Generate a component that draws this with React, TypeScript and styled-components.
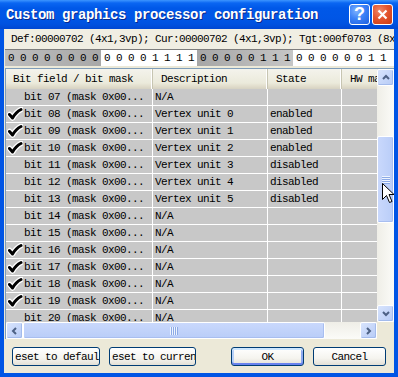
import styled, { createGlobalStyle } from 'styled-components';

const GlobalStyle = createGlobalStyle`
    html, body {
        margin: 0;
        padding: 0;
        background: #ffffff;
    }
    body {
        font-family: "Liberation Mono", "DejaVu Sans Mono", monospace;
    }
`;

const mono = `
    font-family: "Liberation Mono", "DejaVu Sans Mono", monospace;
    font-size: 11px;
    letter-spacing: -0.6px;
    color: #000;
    white-space: nowrap;
`;

const Window = styled.div`
    position: relative;
    width: 398px;
    height: 377px;
    display: flex;
    flex-direction: column;
    background: #0055e5;
    overflow: hidden;
`;

const TitleBar = styled.div`
    height: 29px;
    flex: none;
    display: flex;
    align-items: center;
    padding: 0 5px 0 6px;
    background: linear-gradient(to bottom, #3d95ff 0px, #0a66f2 3px, #0058e8 8px, #0056e6 18px, #0052e0 24px, #0047d2 29px);
`;

const Title = styled.div`
    flex: 1;
    font-family: "Liberation Mono", "DejaVu Sans Mono", monospace;
    font-size: 14px;
    font-weight: bold;
    letter-spacing: -0.4px;
    color: #ffffff;
    text-shadow: 1px 1px 0 #0b2a8c;
    white-space: nowrap;
`;

const CaptionButton = styled.div<{ kind: 'help' | 'close' }>`
    width: 21px;
    height: 21px;
    box-sizing: border-box;
    margin-left: 2px;
    border: 1px solid #ffffff;
    border-radius: 3px;
    display: flex;
    align-items: center;
    justify-content: center;
    background: ${props => props.kind === 'close'
        ? 'radial-gradient(circle at 35% 30%, #f0896b 0%, #e3552f 45%, #c93a12 100%)'
        : 'radial-gradient(circle at 35% 30%, #7fb3ff 0%, #3c82f7 45%, #1e5fe0 100%)'};
    color: #ffffff;
    font-family: "Liberation Sans", Arial, sans-serif;
    font-weight: bold;
    font-size: 18px;
`;

const Body = styled.div`
    flex: 1;
    margin: 0 4px 4px 4px;
    padding-left: 1px;
    background: #ece9d8;
    display: flex;
    flex-direction: column;
`;

const InfoLine = styled.div`
    ${mono}
    height: 20px;
    flex: none;
    display: flex;
    align-items: center;
    padding-left: 6px;
    background: #f0eee3;
    border-bottom: 1px solid #7d7d7d;
    overflow: hidden;
`;

const BitsRow = styled.div`
    ${mono}
    height: 16px;
    flex: none;
    display: flex;
    background: #ffffff;
    overflow: hidden;
`;

const BitGroup = styled.div<{ shaded: boolean; reverse?: boolean }>`
    width: 96px;
    flex: none;
    display: flex;
    align-items: center;
    background: ${props => props.shaded
        ? (props.reverse
            ? 'linear-gradient(to right, #a6a6a6, #c6c6c6)'
            : 'linear-gradient(to right, #bdbdbd, #a8a8a8)')
        : '#ffffff'};
`;

const Bit = styled.span`
    width: 12px;
    text-align: center;
`;

const List = styled.div`
    margin-top: 2px;
    height: 271px;
    flex: none;
    box-sizing: border-box;
    border-top: 1px solid #7f9db9;
    border-left: 1px solid #7f9db9;
    display: grid;
    grid-template-columns: 1fr 17px;
    grid-template-rows: 1fr 17px;
    background: #ffffff;
`;

const Viewport = styled.div`
    overflow: hidden;
    background: #c8c8c8;
`;

const Header = styled.div`
    height: 20px;
    display: flex;
    background: linear-gradient(to bottom, #f4f3ec 0%, #ebeadb 70%, #e2decd 85%, #d6d2c2 100%);
`;

const HeaderCell = styled.div<{ width: number; indent?: number }>`
    ${mono}
    width: ${props => props.width}px;
    flex: none;
    box-sizing: border-box;
    padding-left: ${props => props.indent ?? 8}px;
    display: flex;
    align-items: center;
    border-right: 1px solid #c7c5b2;
    box-shadow: inset -1px 0 0 #ffffff;
    overflow: hidden;
`;

const Row = styled.div`
    height: 17px;
    display: flex;
    box-sizing: border-box;
    border-bottom: 1px solid #ffffff;
`;

const Cell = styled.div<{ width: number }>`
    ${mono}
    width: ${props => props.width}px;
    flex: none;
    box-sizing: border-box;
    padding-left: 2px;
    display: flex;
    align-items: center;
    border-right: 1px solid #ffffff;
    overflow: hidden;
`;

const CheckSlot = styled.span`
    width: 17px;
    height: 16px;
    flex: none;
    display: flex;
    align-items: center;
    justify-content: flex-start;
    margin-left: -1px;
`;

const VScroll = styled.div`
    display: flex;
    flex-direction: column;
    background: linear-gradient(to right, #efeee7, #fbfbf8);
`;

const HScroll = styled.div`
    display: flex;
    background: linear-gradient(to bottom, #efeee7, #fbfbf8);
`;

const Corner = styled.div`
    background: #ece9d8;
`;

const ArrowButton = styled.div`
    width: 17px;
    height: 17px;
    flex: none;
    box-sizing: border-box;
    border: 1px solid #ffffff;
    border-radius: 2px;
    display: flex;
    align-items: center;
    justify-content: center;
    background: linear-gradient(135deg, #d8e4fd, #b7cbf6);
    box-shadow: inset -1px -1px 0 #a3bbec;
`;

const Track = styled.div<{ size?: number }>`
    flex: ${props => props.size ? `none` : '1'};
    ${props => props.size ? `height: ${props.size}px;` : ''}
`;

const Thumb = styled.div<{ vertical: boolean; size: number }>`
    flex: none;
    box-sizing: border-box;
    ${props => props.vertical ? `height: ${props.size}px;` : `width: ${props.size}px;`}
    border: 1px solid #ffffff;
    border-radius: 2px;
    display: flex;
    align-items: center;
    justify-content: center;
    background: ${props => props.vertical
        ? 'linear-gradient(to right, #c9d8fc, #b9cdf8)'
        : 'linear-gradient(to bottom, #c9d8fc, #b9cdf8)'};
    box-shadow: inset -1px -1px 0 #a8bef0;
`;

const ButtonBar = styled.div`
    flex: 1;
    display: flex;
    align-items: flex-start;
    padding: 8px 8px 0 7px;
`;

const Button = styled.div<{ width: number; main?: boolean; align?: string }>`
    ${mono}
    width: ${props => props.width}px;
    height: 19px;
    box-sizing: border-box;
    border: 1px solid #003c74;
    border-radius: 3px;
    display: flex;
    align-items: center;
    justify-content: ${props => props.align || 'center'};
    padding-left: ${props => props.align ? '2px' : '0'};
    margin-right: 9px;
    overflow: hidden;
    background: linear-gradient(to bottom, #ffffff 0%, #f5f4ef 60%, #e3e0d6 100%);
    ${props => props.main && `
        box-shadow: inset 0 2px 0 #cee7ff, inset 0 -2px 0 #6982ee, inset 2px 0 0 #b8d1f8, inset -2px 0 0 #8ea9f0;
    `}
`;

const Spacer = styled.div`
    flex: 1;
`;

const Cursor = styled.svg`
    position: absolute;
    left: 382px;
    top: 183px;
`;

const cols = [147, 115, 74, 80];

type Entry = { bit: string; desc: string; state: string; checked: boolean };

const rows: Entry[] = [
    { bit: '07', desc: 'N/A', state: '', checked: false },
    { bit: '08', desc: 'Vertex unit 0', state: 'enabled', checked: true },
    { bit: '09', desc: 'Vertex unit 1', state: 'enabled', checked: true },
    { bit: '10', desc: 'Vertex unit 2', state: 'enabled', checked: true },
    { bit: '11', desc: 'Vertex unit 3', state: 'disabled', checked: false },
    { bit: '12', desc: 'Vertex unit 4', state: 'disabled', checked: false },
    { bit: '13', desc: 'Vertex unit 5', state: 'disabled', checked: false },
    { bit: '14', desc: 'N/A', state: '', checked: false },
    { bit: '15', desc: 'N/A', state: '', checked: false },
    { bit: '16', desc: 'N/A', state: '', checked: true },
    { bit: '17', desc: 'N/A', state: '', checked: true },
    { bit: '18', desc: 'N/A', state: '', checked: true },
    { bit: '19', desc: 'N/A', state: '', checked: true },
    { bit: '20', desc: 'N/A', state: '', checked: false },
];

const bitGroups = ['00000000', '00001111', '00000111', '00000011'];

// heavy tick with a white halo, like the reference
const Check = () => (
    <svg width="16" height="14" viewBox="0 0 16 14">
        <path d="M2.5 7.5 L5.5 11 Q9 5 14 2.5" fill="none" stroke="#ffffff" strokeWidth="5.5" strokeLinecap="round" strokeLinejoin="round" />
        <path d="M2.5 7.5 L5.5 11 Q9 5 14 2.5" fill="none" stroke="#000000" strokeWidth="3" strokeLinecap="round" strokeLinejoin="round" />
    </svg>
);

const Chevron = ({ dir }: { dir: 'up' | 'down' | 'left' | 'right' }) => {
    const d = {
        up: 'M2 6 L5 3 L8 6',
        down: 'M2 3 L5 6 L8 3',
        left: 'M6 2 L3 5 L6 8',
        right: 'M3 2 L6 5 L3 8',
    }[dir];
    return (
        <svg width="10" height="9" viewBox="0 0 10 9">
            <path d={d} fill="none" stroke="#4d6185" strokeWidth="2" />
        </svg>
    );
};

const Grip = ({ vertical }: { vertical: boolean }) => (
    <svg width={8} height={8} viewBox="0 0 8 8">
        {[0, 2, 4, 6].map(i => vertical
            ? <line key={i} x1="0" y1={i + 0.5} x2="8" y2={i + 0.5} stroke="#eef4fe" strokeWidth="1" />
            : <line key={i} x1={i + 0.5} y1="0" x2={i + 0.5} y2="8" stroke="#eef4fe" strokeWidth="1" />)}
        {[1, 3, 5, 7].map(i => vertical
            ? <line key={i} x1="0" y1={i + 0.5} x2="8" y2={i + 0.5} stroke="#8caae6" strokeWidth="1" />
            : <line key={i} x1={i + 0.5} y1="0" x2={i + 0.5} y2="8" stroke="#8caae6" strokeWidth="1" />)}
    </svg>
);

const App = () => {
    return (
        <>
            <GlobalStyle />
            <Window>
                <TitleBar>
                    <Title>Custom graphics processor configuration</Title>
                    <CaptionButton kind="help">?</CaptionButton>
                    <CaptionButton kind="close">
                        <svg width="11" height="11" viewBox="0 0 11 11">
                            <path d="M1.5 1.5 L9.5 9.5 M9.5 1.5 L1.5 9.5" stroke="#ffffff" strokeWidth="2.2" />
                        </svg>
                    </CaptionButton>
                </TitleBar>
                <Body>
                    <InfoLine>Def:00000702 (4x1,3vp); Cur:00000702 (4x1,3vp); Tgt:000f0703 (8x1,3vp)</InfoLine>
                    <BitsRow>
                        {bitGroups.map((group, index) => (
                            <BitGroup key={index} shaded={index % 2 === 0} reverse={index === 2}>
                                {group.split('').map((b, i) => <Bit key={i}>{b}</Bit>)}
                            </BitGroup>
                        ))}
                    </BitsRow>
                    <List>
                        <Viewport>
                            <Header>
                                <HeaderCell width={cols[0]} indent={7}>Bit field / bit mask</HeaderCell>
                                <HeaderCell width={cols[1]}>Description</HeaderCell>
                                <HeaderCell width={cols[2]}>State</HeaderCell>
                                <HeaderCell width={cols[3]}>HW mask</HeaderCell>
                            </Header>
                            {rows.map(entry => (
                                <Row key={entry.bit}>
                                    <Cell width={cols[0]}>
                                        <CheckSlot>{entry.checked && <Check />}</CheckSlot>
                                        bit {entry.bit} (mask 0x00...
                                    </Cell>
                                    <Cell width={cols[1]}>{entry.desc}</Cell>
                                    <Cell width={cols[2]}>{entry.state}</Cell>
                                    <Cell width={cols[3]} />
                                </Row>
                            ))}
                        </Viewport>
                        <VScroll>
                            <ArrowButton><Chevron dir="up" /></ArrowButton>
                            <Track size={50} />
                            <Thumb vertical size={87}><Grip vertical /></Thumb>
                            <Track />
                            <ArrowButton><Chevron dir="down" /></ArrowButton>
                        </VScroll>
                        <HScroll>
                            <ArrowButton><Chevron dir="left" /></ArrowButton>
                            <Thumb vertical={false} size={302}><Grip vertical={false} /></Thumb>
                            <Track />
                            <ArrowButton><Chevron dir="right" /></ArrowButton>
                        </HScroll>
                        <Corner />
                    </List>
                    <ButtonBar>
                        <Button width={88} align="flex-start">eset to defaul</Button>
                        <Button width={87} align="flex-start">eset to curren</Button>
                        <Spacer />
                        <Button width={73} main>OK</Button>
                        <Button width={73} style={{ marginRight: 0 }}>Cancel</Button>
                    </ButtonBar>
                </Body>
                <Cursor width="13" height="21" viewBox="0 0 13 21">
                    <path d="M0.5 0.5 L0.5 16.5 L4.5 12.5 L7.5 19.5 L10 18.5 L7 11.5 L12 11.5 Z" fill="#ffffff" stroke="#000000" strokeWidth="1" strokeLinejoin="miter" />
                </Cursor>
            </Window>
        </>
    );
};

export default App;
